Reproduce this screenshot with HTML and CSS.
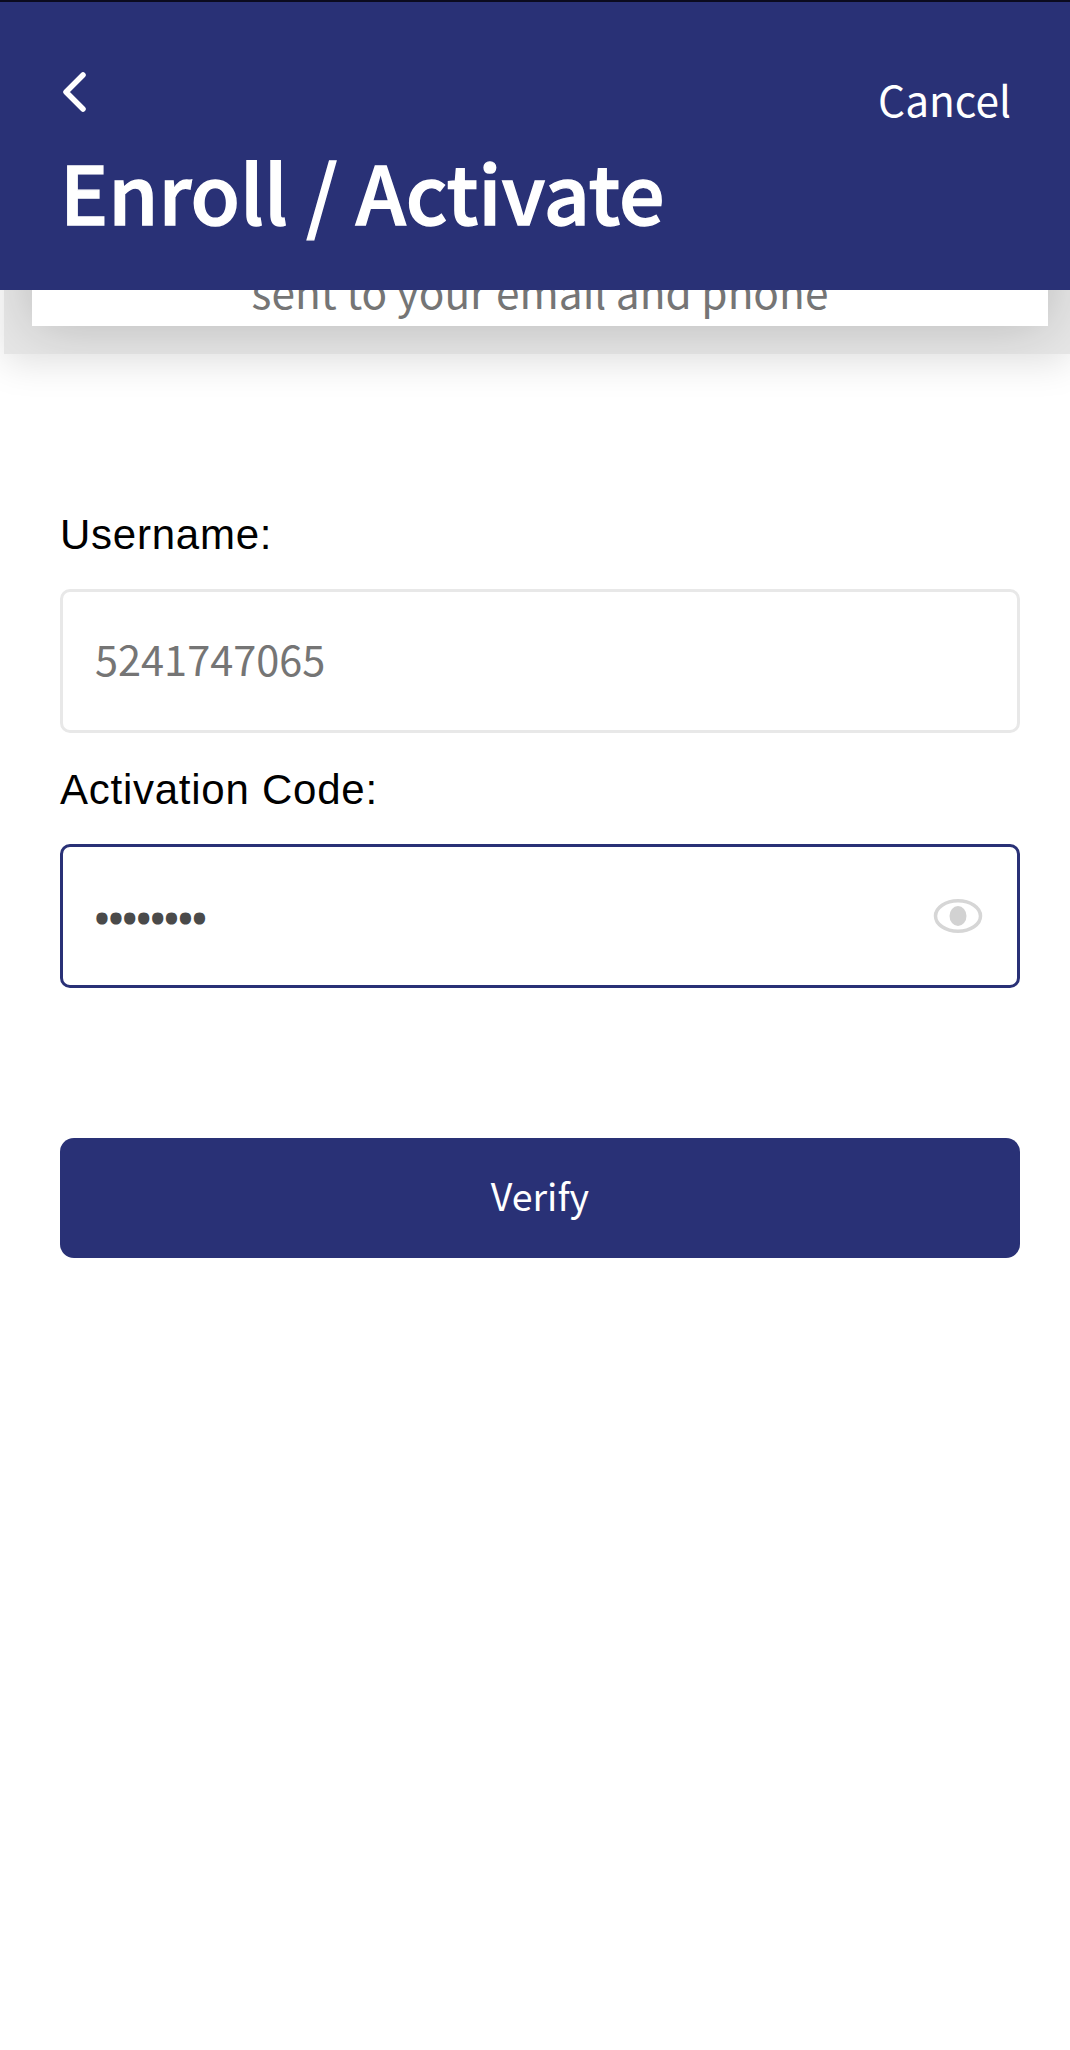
FILE: index.html
```html
<!DOCTYPE html>
<html lang="en">
<head>
<meta charset="utf-8">
<title>Enroll / Activate</title>
<link rel="stylesheet" href="styles.css">
</head>
<body>
<header class="header">
  <div class="header-top">
    <svg class="back" width="30" height="48" viewBox="0 0 30 48" aria-hidden="true"><path d="M23 7 L6 24 L23 41"/></svg>
    <span class="cancel">Cancel</span>
  </div>
  <h1 class="title">Enroll / Activate</h1>
</header>
<div class="notice-shadow">
  <div class="notice">sent to your email and phone</div>
</div>
<main class="form">
  <label class="label" for="user">Username:</label>
  <div class="field"><input class="input" id="user" type="text" value="5241747065"></div>
  <label class="label label-second" for="code">Activation Code:</label>
  <div class="field field-active">
    <input class="input input-code" id="code" type="password" value="12345678">
    <svg class="eye" width="50" height="36" viewBox="0 0 50 36" aria-hidden="true"><ellipse class="eye-line" cx="25" cy="18" rx="22.5" ry="15.25"/><ellipse class="eye-dot" cx="25" cy="18" rx="8.5" ry="10"/></svg>
  </div>
  <button class="verify" type="button">Verify</button>
</main>
</body>
</html>
```
FILE: styles.css
```css
* { box-sizing: border-box; }
html, body { margin: 0; padding: 0; background: #fff; }
body { width: 1070px; height: 2050px; overflow: hidden; font-family: "Noto Sans CJK SC", "Noto Sans", sans-serif; }

.header {
  position: relative;
  z-index: 2;
  height: 290px;
  background: #293176;
  border-top: 2px solid #0b0b1e;
  padding: 66px 60px 0 60px;
  color: #fff;
}
.header-top { display: flex; justify-content: space-between; align-items: flex-start; height: 74px; }
.back { fill: none; stroke: #fff; stroke-width: 5.5; stroke-linecap: round; stroke-linejoin: round; display: block; }
.cancel { font-size: 42.4px; line-height: 64px; margin: -1px -1px 0 0; }
.title { margin: 0; font-size: 80.5px; font-weight: 500; -webkit-text-stroke: 1.4px #fff; line-height: 96px; }

.notice-shadow {
  margin: -60px 0 0 4px;
  height: 124px;
  padding: 0 22px 28px 28px;
  overflow: hidden;
  background: #e6e6e6;
  box-shadow: 0 8px 36px rgba(0, 0, 0, .13);
}
.notice {
  height: 96px;
  background: #fff;
  box-shadow: 0 0 56px rgba(0, 0, 0, .2);
  padding-top: 36px;
  text-align: center;
  font-size: 42.4px;
  line-height: 50px;
  color: #757575;
}

.form { padding: 156px 50px 0 60px; display: flex; flex-direction: column; }
.label { font-family: "Liberation Sans", Arial, sans-serif; font-size: 42px; letter-spacing: .75px; line-height: 50px; color: #000; }
.label-second { margin-top: 32px; }
.field {
  position: relative;
  display: flex;
  align-items: center;
  height: 144px;
  margin-top: 29px;
  border: 3px solid #e8e8e8;
  border-radius: 10px;
  background: #fff;
}
.field-active { border-color: #293176; }
.input {
  flex: 1;
  min-width: 0;
  height: 100%;
  border: 0;
  outline: 0;
  background: transparent;
  padding: 0 32px 7px;
  font-family: "Noto Sans CJK SC", sans-serif;
  font-size: 41.5px;
  color: #757575;
}
.input-code { font-family: "Noto Sans", sans-serif; font-size: 37px; color: #4a4a4a; -webkit-text-stroke: 3px #4a4a4a; padding: 3px 32px 0; }
.eye { flex: none; margin-right: 34px; }
.eye-line { fill: none; stroke: #d6d6d6; stroke-width: 3.5; }
.eye-dot { fill: #d2d2d2; }
.verify {
  height: 120px;
  margin-top: 150px;
  padding: 0 0 7px;
  border: 0;
  border-radius: 14px;
  background: #293176;
  color: #fff;
  font-family: "Noto Sans CJK SC", sans-serif;
  font-size: 37.5px;
}
```
